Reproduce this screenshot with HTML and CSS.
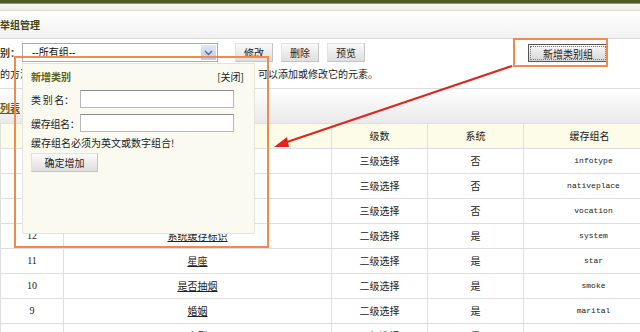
FILE: index.html
```html
<!DOCTYPE html>
<html lang="zh-CN">
<head>
    <meta charset="UTF-8">
    <title>类别组管理</title>
    <link rel="stylesheet" href="styles.css">
</head>
<body>
    <div class="top-line"></div>
    <div class="sub-line"></div>
    <div class="title-bar">
        <h1 class="title">举组管理</h1>
    </div>

    <div class="toolbar">
        <span class="tool-label">别：</span>
        <div class="select">
            <span class="select-text">--所有组--</span>
            <span class="select-arrow">
                <svg width="9" height="6" viewBox="0 0 9 6"><path d="M1 1 L4.5 4.5 L8 1" fill="none" stroke="#4d6a9a" stroke-width="1.4"/></svg>
            </span>
        </div>
        <button class="btn">修改</button>
        <button class="btn">删除</button>
        <button class="btn">预览</button>
        <div class="spacer"></div>
        <button class="btn btn-new">新增类别组</button>
    </div>

    <div class="hint">
        <span class="hint-left">的方法是先选中一个类别组，就</span>
        <span>可以添加或修改它的元素。</span>
    </div>

    <div class="list-head">
        <a class="list-title" href="#">列表</a>
    </div>

    <table class="grid">
        <colgroup>
            <col style="width:63px">
            <col style="width:268px">
            <col style="width:96px">
            <col style="width:96px">
            <col style="width:132px">
        </colgroup>
        <thead>
            <tr><th>ID</th><th>类别组名称</th><th>级数</th><th>系统</th><th>缓存组名</th></tr>
        </thead>
        <tbody>
            <tr><td>15</td><td><a href="#">信息类型</a></td><td>三级选择</td><td>否</td><td class="code">infotype</td></tr>
            <tr><td>14</td><td><a href="#">籍贯</a></td><td>三级选择</td><td>否</td><td class="code">nativeplace</td></tr>
            <tr><td>13</td><td><a href="#">职业</a></td><td>三级选择</td><td>否</td><td class="code">vocation</td></tr>
            <tr><td class="num">12</td><td><a href="#">系统缓存标识</a></td><td>二级选择</td><td>是</td><td class="code">system</td></tr>
            <tr><td class="num">11</td><td><a href="#">星座</a></td><td>二级选择</td><td>是</td><td class="code">star</td></tr>
            <tr><td class="num">10</td><td><a href="#">是否抽烟</a></td><td>二级选择</td><td>是</td><td class="code">smoke</td></tr>
            <tr><td class="num">9</td><td><a href="#">婚姻</a></td><td>二级选择</td><td>是</td><td class="code">marital</td></tr>
            <tr><td class="num">8</td><td><a href="#">血型</a></td><td>二级选择</td><td>是</td><td class="code">blood</td></tr>
        </tbody>
    </table>

    <!-- 弹出的新增类别框 -->
    <div class="popup">
        <div class="popup-head">
            <span class="popup-title">新增类别</span>
            <a class="popup-close" href="#">[关闭]</a>
        </div>
        <div class="field">
            <label>类 别 名：</label>
            <input type="text">
        </div>
        <div class="field">
            <label>缓存组名：</label>
            <input type="text">
        </div>
        <p class="popup-note">缓存组名必须为英文或数字组合!</p>
        <button class="btn btn-add">确定增加</button>
    </div>

    <div class="mark mark-popup"></div>
    <div class="mark mark-btn"></div>
    <svg class="arrow" width="640" height="332" viewBox="0 0 640 332">
        <line x1="512" y1="66" x2="284" y2="143" stroke="#e0241c" stroke-width="2"/>
        <path d="M274 147 L287 137 L289 147 Z" fill="#e0241c"/>
    </svg>
</body>
</html>
```

FILE: styles.css
```css
body {
    margin: 0;
    width: 640px;
    height: 332px;
    overflow: hidden;
    position: relative;
    background-color: #ffffff;
    font-family: "Noto Sans CJK SC", sans-serif;
    font-size: 10px;
    color: #222222;
}

.top-line {
    height: 3px;
    background-color: #4f5a20;
    border-bottom: 1px solid #8e9860;
}

.sub-line {
    height: 6px;
    background: linear-gradient(#f7f8f4, #eceee6);
    border-bottom: 1px solid #dcdcc8;
}

.title-bar {
    height: 27px;
    display: flex;
    align-items: center;
    background: linear-gradient(#ffffff, #f1f1f1);
    border-bottom: 1px solid #dadada;
}

.title {
    margin: 0;
    font-size: 10px;
    font-weight: bold;
    color: #3f4514;
}

.toolbar {
    height: 27px;
    display: flex;
    align-items: center;
    gap: 8px;
    padding-right: 32px;
}

.tool-label {
    font-weight: bold;
    color: #3f4514;
    width: 14px;
}

.select {
    width: 194px;
    height: 17px;
    border: 1px solid #a5acb5;
    display: flex;
    align-items: center;
    background-color: #ffffff;
    margin-right: 9px;
}

.select-text {
    flex: 1;
    padding-left: 9px;
    line-height: 15px;
    font-family: "Liberation Sans", "Noto Sans CJK SC", sans-serif;
    color: #111111;
}

.select-arrow {
    width: 15px;
    height: 15px;
    margin-right: 1px;
    display: flex;
    align-items: center;
    justify-content: center;
    background: linear-gradient(#dfe8f6, #bccbe6);
}

.btn {
    font-family: "Noto Sans CJK SC", sans-serif;
    font-size: 10px;
    color: #222222;
    height: 19px;
    padding: 0 8px;
    border: 1px solid #e2e2e2;
    border-right-color: #c4c4c4;
    border-bottom-color: #c4c4c4;
    background: linear-gradient(#fafafa, #dedede);
    line-height: 17px;
}

.spacer {
    flex: 1;
}

.btn-new {
    width: 80px;
    height: 18px;
    padding: 0;
    border: 1px solid #555555;
    outline: 1px dotted #777777;
    outline-offset: -3px;
    background: linear-gradient(#f8f8f8, #d6d6d6);
}

.hint {
    height: 15px;
    display: flex;
    align-items: center;
    line-height: 15px;
}

.hint-left {
    width: 258px;
    overflow: hidden;
    white-space: nowrap;
}

.list-head {
    margin-top: 7px;
    height: 34px;
    display: flex;
    align-items: center;
    border-top: 1px solid #dcdcdc;
    background: linear-gradient(#ffffff, #e9e9e9);
}

.list-title {
    font-weight: bold;
    color: #6a5a14;
    margin-top: 2px;
}

.grid {
    width: 655px;
    border-collapse: collapse;
    table-layout: fixed;
}

.grid th,
.grid td {
    height: 24px;
    padding: 0;
    border: 1px solid #dedede;
    text-align: center;
    font-weight: normal;
    line-height: 14px;
    white-space: nowrap;
}

.grid th {
    background-color: #fcfce9;
}

.grid td a {
    color: #222222;
}

.grid .num {
    font-family: "Liberation Serif", serif;
    font-size: 10px;
}

.grid .code {
    font-family: "Liberation Mono", monospace;
    font-size: 8px;
    padding-left: 8px;
}

.popup {
    position: absolute;
    left: 22px;
    top: 63px;
    width: 213px;
    height: 159px;
    padding: 4px 10px 6px 8px;
    background-color: #fafaf0;
    border: 1px solid #e4e4d8;
}

.popup-head {
    height: 17px;
    display: flex;
    align-items: center;
    justify-content: space-between;
    margin-bottom: 2px;
}

.popup-title {
    font-weight: bold;
    color: #5e5e10;
}

.popup-close {
    color: #222222;
    text-decoration: none;
}

.field {
    display: flex;
    align-items: center;
    height: 24px;
}

.field label {
    width: 49px;
    white-space: nowrap;
    letter-spacing: -0.3px;
}

.field input {
    width: 150px;
    height: 14px;
    border: 1px solid #b8b8b8;
    border-top-color: #8d8d8d;
    padding: 1px;
    margin: 0;
}

.popup-note {
    margin: 0;
    height: 16px;
    line-height: 16px;
}

.btn-add {
    margin-top: 2px;
    width: 67px;
    padding: 0;
}

.mark {
    position: absolute;
    border: 2px solid #f08b4f;
}

.mark-popup {
    left: 14px;
    top: 56px;
    width: 251px;
    height: 188px;
}

.mark-btn {
    left: 513px;
    top: 38px;
    width: 91px;
    height: 25px;
}

.arrow {
    position: absolute;
    left: 0;
    top: 0;
}
```
